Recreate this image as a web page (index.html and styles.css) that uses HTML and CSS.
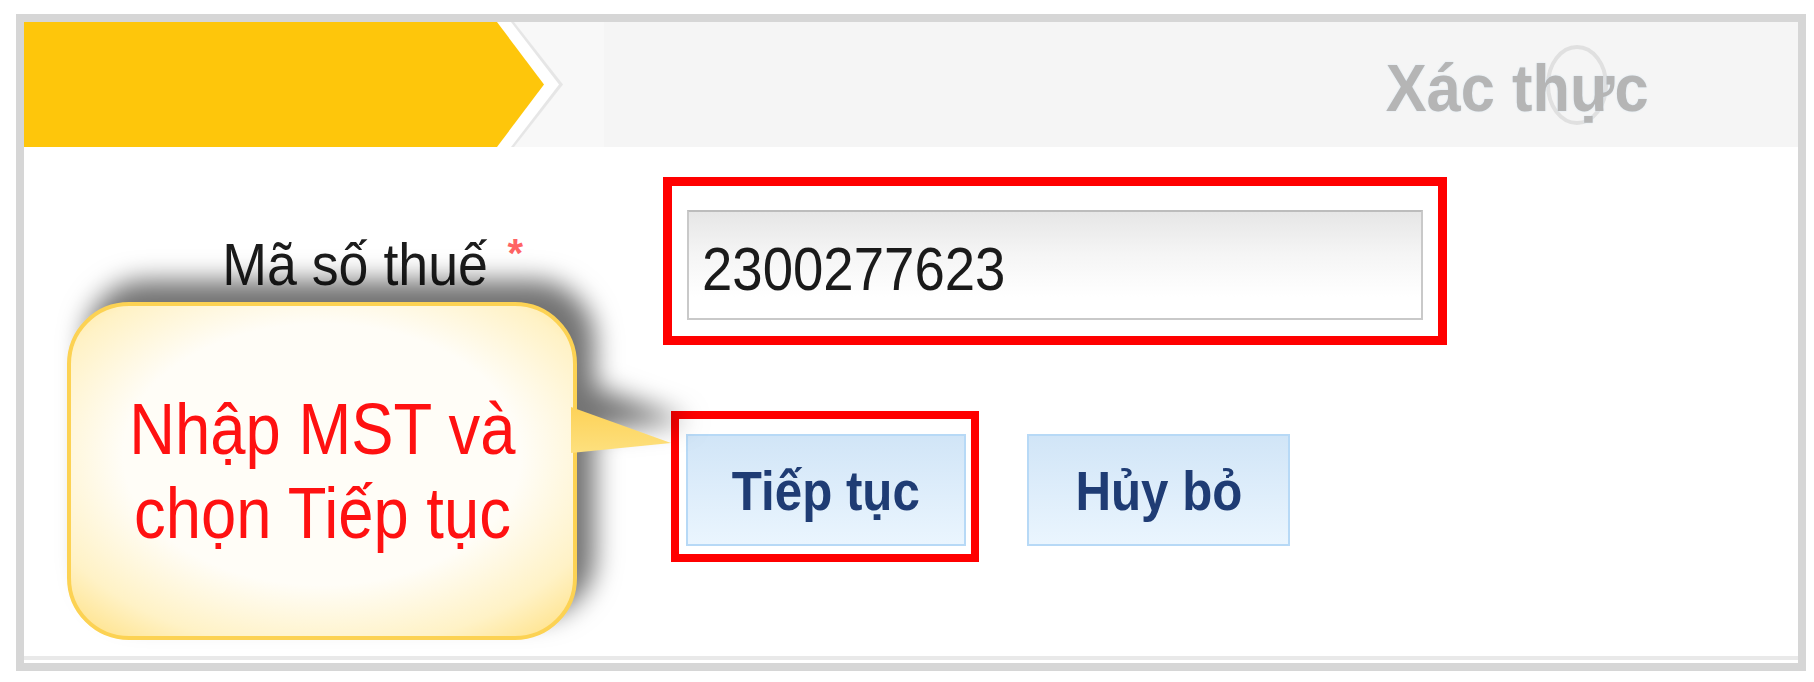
FILE: index.html
```html
<!DOCTYPE html>
<html lang="vi">
<head>
    <meta charset="UTF-8">
    <meta name="viewport" content="width=device-width, initial-scale=1.0">
    <title>Xác thực mã số thuế</title>
    <link rel="stylesheet" href="styles.css">
</head>
<body>
    <div class="frame">
        <div class="steps">
            <svg class="chev" viewBox="0 0 580 125" aria-hidden="true">
                <rect x="0" y="0" width="580" height="125" fill="#f8f8f8"/>
                <polygon points="0,0 490,0 539,62.5 490,125 0,125" fill="#e6e6e6"/>
                <polygon points="0,0 487,0 535,62.5 487,125 0,125" fill="#ffffff"/>
                <polygon points="0,0 473,0 520,62.5 473,125 0,125" fill="#fec60b"/>
            </svg>
            <svg class="ring" viewBox="0 0 64 82" aria-hidden="true">
                <ellipse cx="32" cy="41" rx="29" ry="38" fill="none" stroke="#e0e0e0" stroke-width="4"/>
            </svg>
            <div class="step-title"><span class="squeeze-r">Xác thực</span></div>
        </div>

        <div class="form">
            <div class="row">
                <div class="label"><span class="squeeze-r">Mã số thuế</span><span class="req">*</span></div>
                <div class="mark">
                    <div class="field"><span class="squeeze">2300277623</span></div>
                </div>
            </div>

            <div class="actions">
                <div class="mark tight">
                    <button class="btn"><span class="squeeze-c">Tiếp tục</span></button>
                </div>
                <button class="btn cancel"><span class="squeeze-c">Hủy bỏ</span></button>
            </div>

            <div class="callout">
                <div class="bubble"><span class="squeeze-c">Nhập MST và<br>chọn Tiếp tục</span></div>
            </div>
        </div>
    </div>
</body>
</html>
```

FILE: styles.css
```css
*{margin: 0;padding: 0;box-sizing: border-box;}
body{background: #fff;font-family: "Liberation Sans", Arial, sans-serif;}

/* text in the shot is a bit squeezed sideways */
.squeeze,.squeeze-r,.squeeze-c{display: inline-block;transform: scaleX(.92);}
.squeeze{transform-origin: left center;}
.squeeze-r{transform-origin: right center;}
.squeeze-c{transform-origin: center center;}

.frame{
    width: 1790px;
    height: 657px;
    margin: 14px 0 0 16px;
    border: 8px solid #d6d6d6;
    padding-bottom: 3px;
    display: flex;
    flex-direction: column;
}

/* header with step arrow */
.steps{
    height: 125px;
    flex-shrink: 0;
    background: #f5f5f5;
    display: flex;
    align-items: center;
    justify-content: space-between;
    position: relative;
}
.chev{display: block;width: 580px;height: 125px;}
.ring{position: absolute;left: 1521px;top: 22px;width: 64px;height: 82px;}
.step-title{
    position: relative;
    padding: 6px 149px 0 0;
    font-size: 66px;
    font-weight: bold;
    color: #b5b5b5;
    text-shadow: 0 0 2px #d3e4f1;
}
.step-title .squeeze-r{transform: scaleX(.93);}

/* form body */
.form{
    flex: 1;
    position: relative;
    border-bottom: 4px solid #e9e9e9;
}
.row{display: flex;align-items: center;margin-top: 30px;}
.label{
    width: 499px;
    padding-top: 8px;
    text-align: right;
    font-size: 59px;
    color: #1c1c1c;
}
.label .squeeze-r{transform: scaleX(.91);}
.req{
    display: inline-block;
    margin-left: 20px;
    vertical-align: top;
    font-size: 40px;
    font-weight: bold;
    line-height: 44px;
    color: #ff6464;
}

.mark{
    border: 9px solid #ff0000;
    padding: 24px 15px 16px;
    margin-left: 140px;
}
.field{
    width: 736px;
    height: 110px;
    padding: 6px 0 0 13px;
    display: flex;
    align-items: center;
    border: 2px solid #c9c9c9;
    border-top-color: #bcbcbc;
    background: linear-gradient(#e6e6e6, #f5f5f5 40%, #fff 80%);
    font-size: 62px;
    color: #1a1a1a;
}
.field .squeeze{transform: scaleX(.88);}

.actions{
    display: flex;
    align-items: flex-start;
    margin-top: 66px;
    padding-left: 647px;
}
.mark.tight{border-width: 8px;padding: 15px 5px 8px 7px;margin-left: 0;}
.btn{
    display: block;
    width: 280px;
    height: 112px;
    border: 2px solid #b7d9f6;
    background: linear-gradient(#d1e5f7, #eaf5fe);
    font: bold 56px "Liberation Sans", Arial, sans-serif;
    color: #1f3c74;
}
.btn .squeeze-c{transform: scaleX(.88);}
.btn.cancel{width: 263px;margin: 23px 0 0 48px;}

/* yellow note over the form */
.callout{
    position: absolute;
    left: 43px;
    top: 155px;
    width: 510px;
    height: 338px;
    filter: drop-shadow(18px -22px 13px rgba(0, 0, 0, .55));
}
.callout::after{
    content: "";
    position: absolute;
    left: 504px;
    top: 105px;
    width: 100px;
    height: 46px;
    background: linear-gradient(#fdd258, #fde07e);
    clip-path: polygon(0 0, 100% 78%, 0 100%);
}
.bubble{
    height: 100%;
    border: 4px solid #fcd253;
    border-radius: 62px;
    background: radial-gradient(ellipse 72% 72% at 50% 45%, #fffdf7 55%, #fff2c6 82%, #ffe289 100%);
    display: flex;
    align-items: center;
    justify-content: center;
    text-align: center;
    font-size: 72px;
    line-height: 84px;
    color: #ff1111;
}
.bubble .squeeze-c{transform: scaleX(.88);}
```
